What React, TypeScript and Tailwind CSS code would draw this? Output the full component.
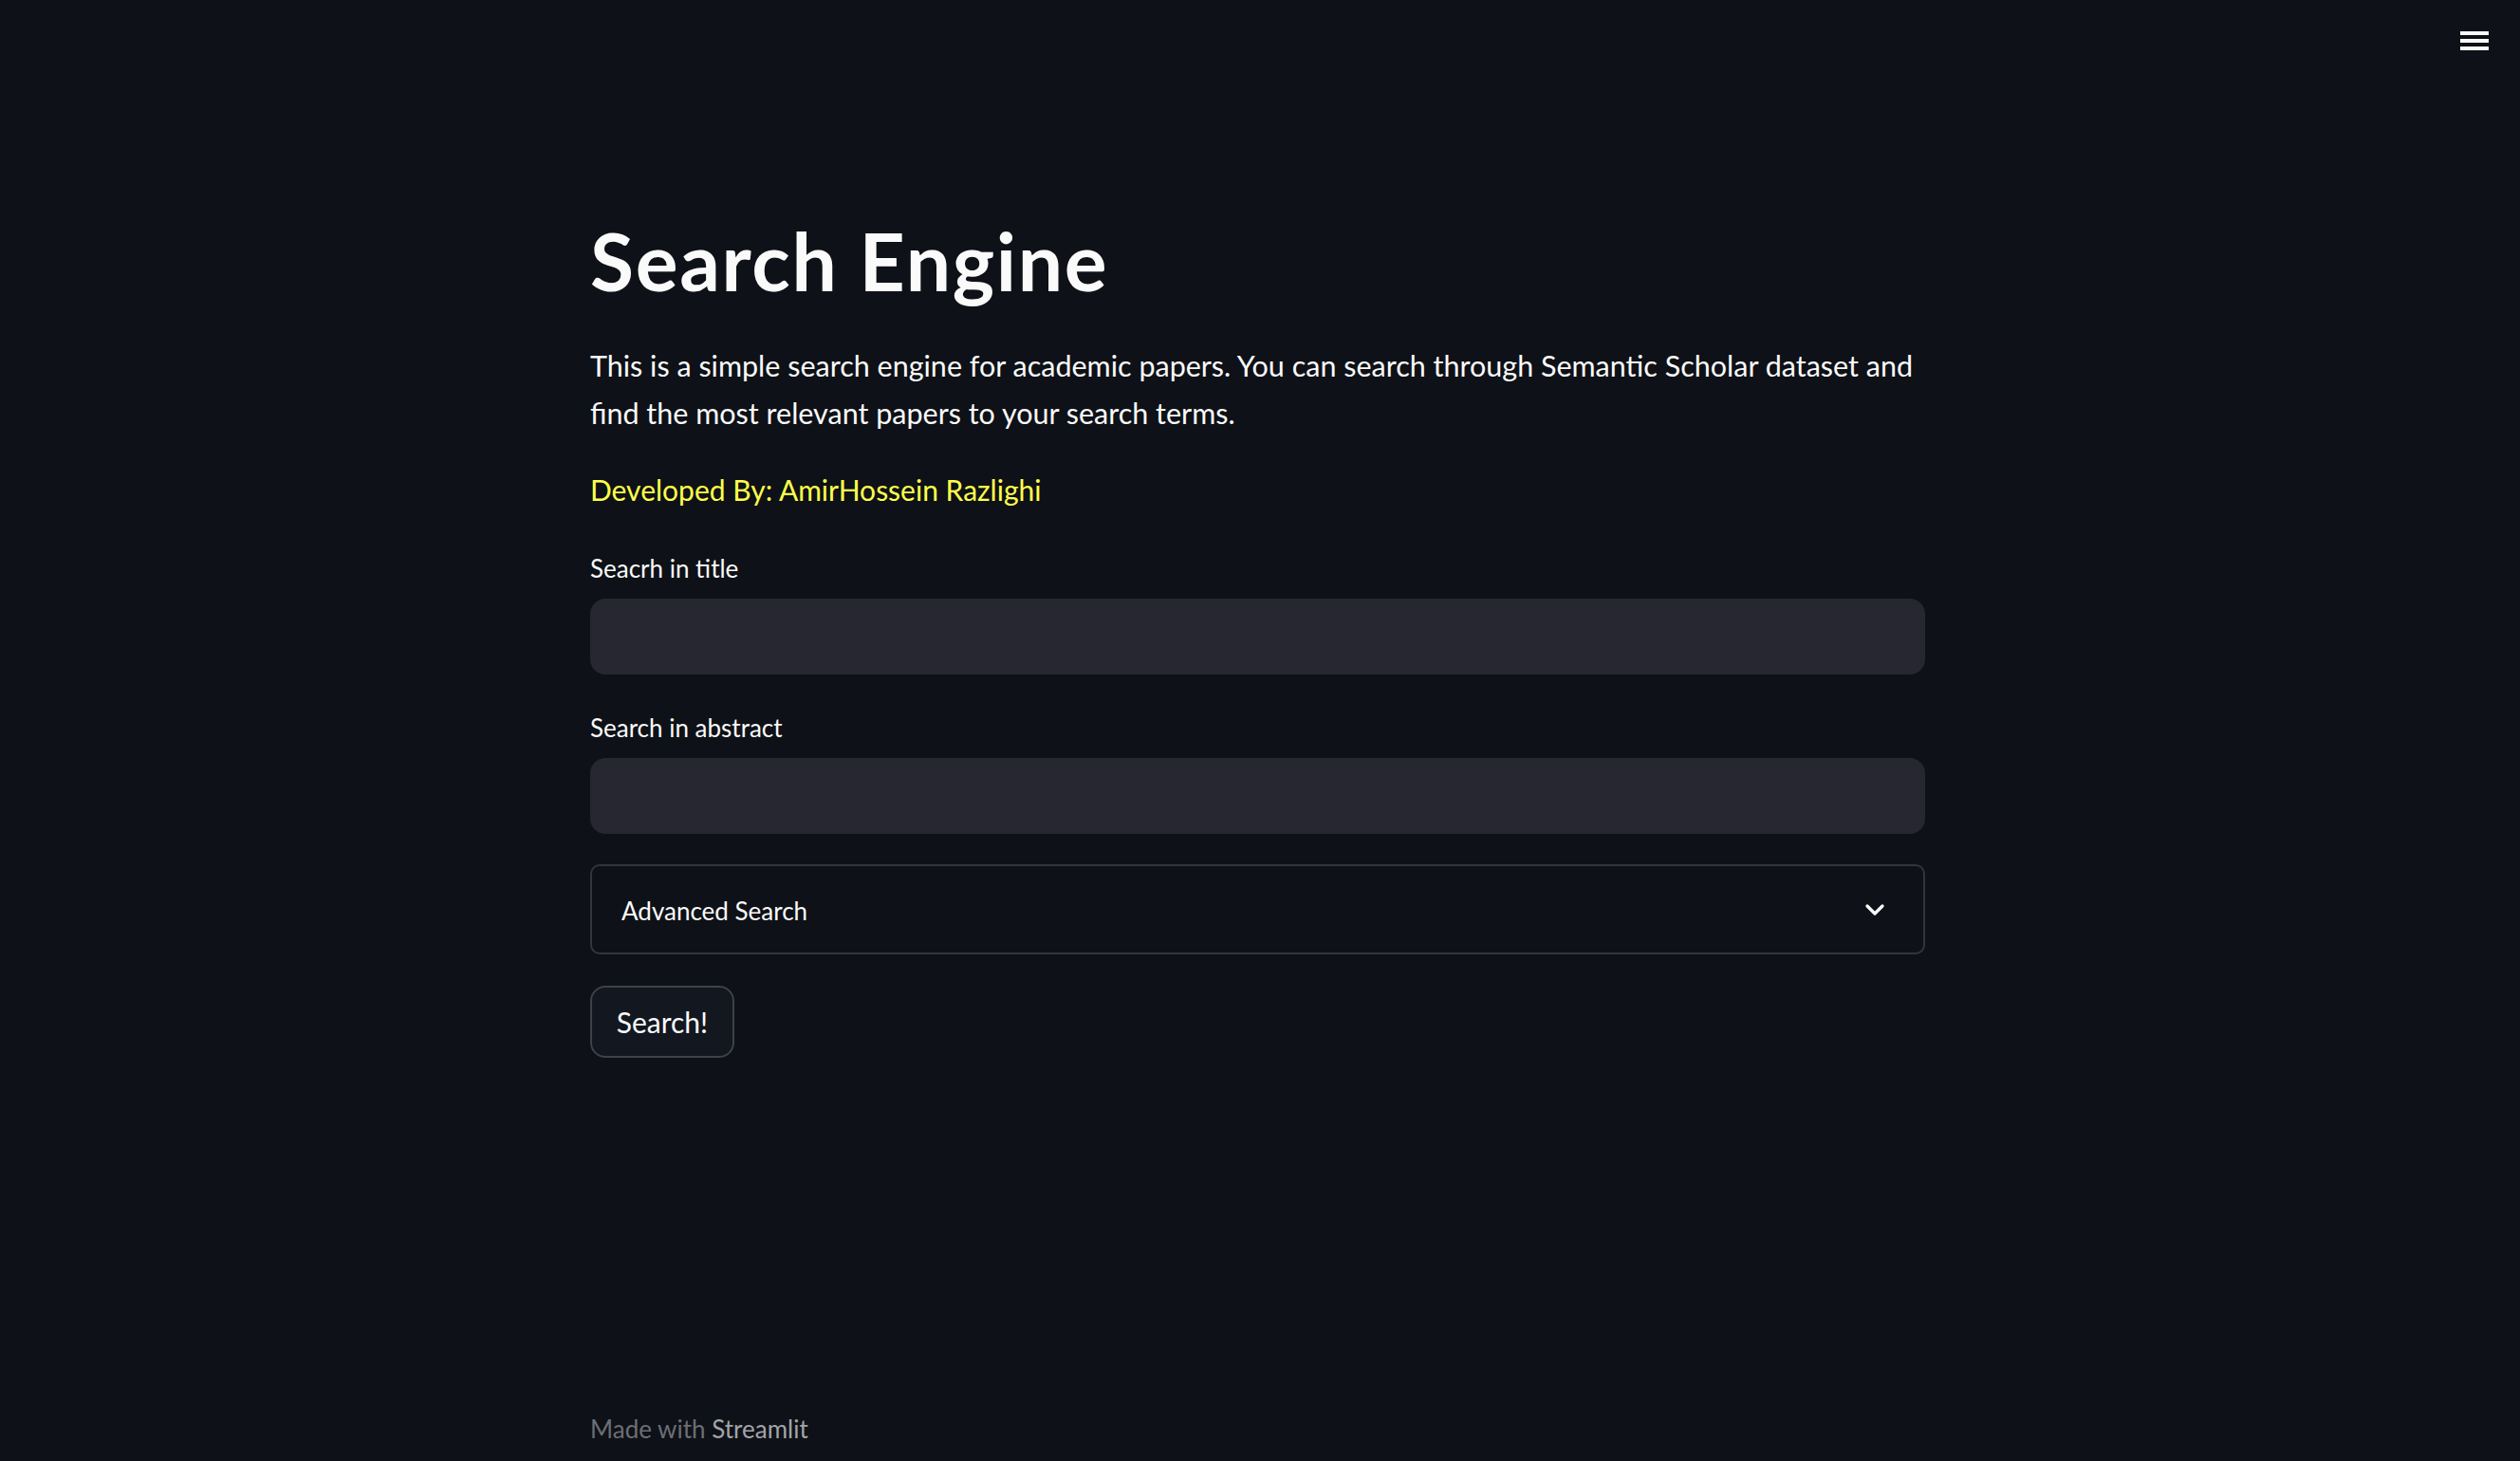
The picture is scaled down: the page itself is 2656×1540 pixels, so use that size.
import { ChevronDown } from 'lucide-react';

export default function App() {
  return (
    <div className="relative min-h-[1540px] w-full bg-[#0e1117] text-[#fafafa] font-['Lato',sans-serif]">
      {/* Header menu */}
      <button className="absolute top-[33px] right-[33px] flex flex-col gap-[4.5px] w-[30px]">
        <span className="block h-[3.5px] w-full bg-[#fafafa]" />
        <span className="block h-[3.5px] w-full bg-[#fafafa]" />
        <span className="block h-[3.5px] w-full bg-[#fafafa]" />
      </button>

      <main className="ml-[622px] w-[1407px] flex flex-col min-h-[1540px]">
        <h1 className="mt-[227px] text-[84px] leading-[96px] font-bold tracking-[0.02em]">Search Engine</h1>

        <p className="mt-[37px] text-[30.5px] leading-[50px]">
          This is a simple search engine for academic papers. You can search through Semantic Scholar dataset and find the most relevant papers to your search terms.
        </p>

        <p className="mt-[31px] text-[30px] leading-[50px] text-[#ffff4b]">Developed By: AmirHossein Razlighi</p>

        {/* Title input */}
        <label className="mt-[40px] text-[26px] leading-[36px]">Seacrh in title</label>
        <input className="mt-[14px] h-[80px] w-full rounded-[16px] bg-[#262730] px-6 text-[30px] outline-none" />

        {/* Abstract input */}
        <label className="mt-[38px] text-[26px] leading-[36px]">Search in abstract</label>
        <input className="mt-[14px] h-[80px] w-full rounded-[16px] bg-[#262730] px-6 text-[30px] outline-none" />

        {/* Expander */}
        <div className="mt-[32px] h-[95px] flex items-center justify-between rounded-[10px] border-2 border-[#33353d] pl-[31px] pr-[35px]">
          <span className="text-[26px] leading-[36px] pt-[2px]">Advanced Search</span>
          <ChevronDown className="w-[32px] h-[32px]" strokeWidth={2.5} />
        </div>

        <div className="mt-[33px]">
          <button className="h-[76px] w-[152px] rounded-[16px] border-2 border-[#3f4149] bg-[#131720] text-[30px]">
            Search!
          </button>
        </div>

        <footer className="mt-auto mb-[16px] text-[26px] leading-[36px] text-[#6c6e74]">
          Made with <span className="text-[#a3a4a8]">Streamlit</span>
        </footer>
      </main>
    </div>
  );
}
